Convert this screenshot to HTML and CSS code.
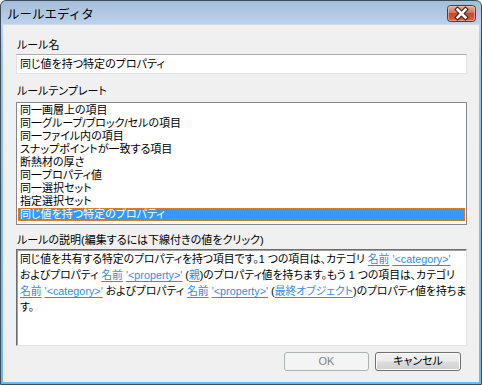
FILE: index.html
```html
<!DOCTYPE html>
<html lang="ja">
<head>
<meta charset="utf-8">
<title>ルールエディタ</title>
<link rel="stylesheet" href="styles.css">
</head>
<body>
<div class="window">
  <div class="titlebar">
    <span class="title">ルールエディタ</span>
    <span class="close">
      <svg width="29" height="17" viewBox="0 0 29 17">
        <defs>
          <linearGradient id="cg" x1="0" y1="0" x2="0" y2="1">
            <stop offset="0" stop-color="#e9b2a3"/>
            <stop offset="0.45" stop-color="#d2745c"/>
            <stop offset="0.5" stop-color="#c2492f"/>
            <stop offset="1" stop-color="#cf6a48"/>
          </linearGradient>
        </defs>
        <rect x="0.5" y="0.5" width="28" height="16" rx="3" fill="url(#cg)" stroke="#6b3326"/>
        <rect x="1.5" y="1.5" width="26" height="14" rx="2" fill="none" stroke="#f2c7bb" stroke-opacity="0.6"/>
        <path d="M10.5 4.5 L18.5 12.5 M18.5 4.5 L10.5 12.5" stroke="#3d1f1a" stroke-width="4.6" stroke-linecap="square"/>
        <path d="M10.5 4.5 L18.5 12.5 M18.5 4.5 L10.5 12.5" stroke="#ffffff" stroke-width="2.6" stroke-linecap="square"/>
      </svg>
    </span>
  </div>
  <div class="client">
    <div class="label">ルール名</div>
    <div class="input">同じ値を持つ特定のプロパティ</div>
    <div class="label label-gap">ルールテンプレート</div>
    <div class="listbox">
      <div class="item">同一画層上の項目</div>
      <div class="item">同一グループ/ブロック/セルの項目</div>
      <div class="item">同一ファイル内の項目</div>
      <div class="item">スナップポイントが一致する項目</div>
      <div class="item">断熱材の厚さ</div>
      <div class="item">同一プロパティ値</div>
      <div class="item">同一選択セット</div>
      <div class="item">指定選択セット</div>
      <div class="item selected">同じ値を持つ特定のプロパティ</div>
    </div>
    <div class="label label-gap2">ルールの説明(編集するには下線付きの値をクリック)</div>
    <div class="desc">
      <div class="line">同じ値を共有する特定のプロパティを持つ項目です。1 つの項目は、カテゴリ <a class="link">名前</a> <a class="link">'&lt;category&gt;'</a></div>
      <div class="line">およびプロパティ <a class="link">名前</a> <a class="link">'&lt;property&gt;'</a> (<a class="link">親</a>)のプロパティ値を持ちます。もう 1 つの項目は、カテゴリ</div>
      <div class="line"><a class="link">名前</a> <a class="link">'&lt;category&gt;'</a> およびプロパティ <a class="link">名前</a> <a class="link">'&lt;property&gt;'</a> (<a class="link">最終オブジェクト</a>)のプロパティ値を持ちま</div>
      <div class="line">す。</div>
    </div>
    <div class="buttons">
      <div class="btn disabled">OK</div>
      <div class="btn">キャンセル</div>
    </div>
  </div>
</div>
</body>
</html>
```
FILE: styles.css
```css
* { box-sizing: border-box; }
html, body { margin: 0; padding: 0; background: #ffffff; }
body {
  font-family: "Liberation Sans", "Noto Sans CJK JP", sans-serif;
  font-size: 11px;
  color: #000;
  font-feature-settings: "palt";
}
.window {
  width: 482px;
  height: 385px;
  border: 1px solid #3f4c5c;
  border-radius: 6px 6px 0 0;
  background: linear-gradient(to bottom, #a4bdda 0px, #bcd3ec 24px, #8fc6ee 60px, #6fb8ea 100%);
  display: flex;
  flex-direction: column;
}
.titlebar {
  height: 23px;
  display: flex;
  align-items: flex-start;
  justify-content: space-between;
  padding: 4px 5px 0 6px;
}
.title {
  font-family: "Noto Sans CJK JP", sans-serif;
  font-size: 12.5px;
  line-height: 16px;
  padding-top: 1px;
  font-feature-settings: normal;
}
.close { display: block; width: 29px; height: 17px; }
.close svg { display: block; }
.client {
  flex: 1;
  margin: 0 2px 2px 2px;
  background: #f0f0f0;
  border-top: 1px solid #d3dde9;
  padding: 13px 12px 11px 13px;
  display: flex;
  flex-direction: column;
}
.label {
  height: 14px;
  line-height: 14px;
  padding-left: 1px;
  margin-bottom: 2px;
  white-space: nowrap;
}
.label-gap { margin-top: 10px; margin-bottom: 4px; }
.label-gap2 { margin-top: 8px; }
.input {
  height: 20px;
  background: #fff;
  border: 1px solid #e2e3ea;
  border-top-color: #abadb3;
  padding: 0 3px;
  line-height: 18px;
}
.listbox {
  height: 123px;
  background: #fff;
  border: 1px solid #828790;
  padding: 1px;
}
.item {
  height: 13px;
  line-height: 13px;
  padding-left: 2px;
  white-space: nowrap;
}
.item.selected {
  background: #3399ff;
  color: #fff;
  outline: 1px dotted #e5862a;
  outline-offset: -1px;
}
.desc {
  height: 97px;
  background: #fff;
  border: 1px solid;
  border-color: #6d6d6d #e3e3e3 #e3e3e3 #6d6d6d;
  box-shadow: inset 1px 1px 0 #a0a0a0;
  padding: 1px 3px;
  font-size: 10.8px;
}
.line {
  height: 16px;
  line-height: 16px;
  white-space: nowrap;
}
.link {
  color: #3b8be0;
  text-decoration: underline;
  text-underline-offset: 2px;
}
.buttons {
  display: flex;
  justify-content: flex-end;
  gap: 6px;
  margin-top: 6px;
  padding-right: 6px;
}
.btn {
  width: 86px;
  height: 19px;
  border: 1px solid #707070;
  border-radius: 3px;
  background: linear-gradient(to bottom, #f2f2f2 0%, #ebebeb 48%, #dddddd 52%, #cfcfcf 100%);
  box-shadow: inset 0 0 0 1px #fcfcfc;
  text-align: center;
  line-height: 17px;
}
.btn.disabled {
  width: 85px;
  border-color: #adb2b5;
  background: #f4f4f4;
  box-shadow: none;
  color: #838383;
}
```
